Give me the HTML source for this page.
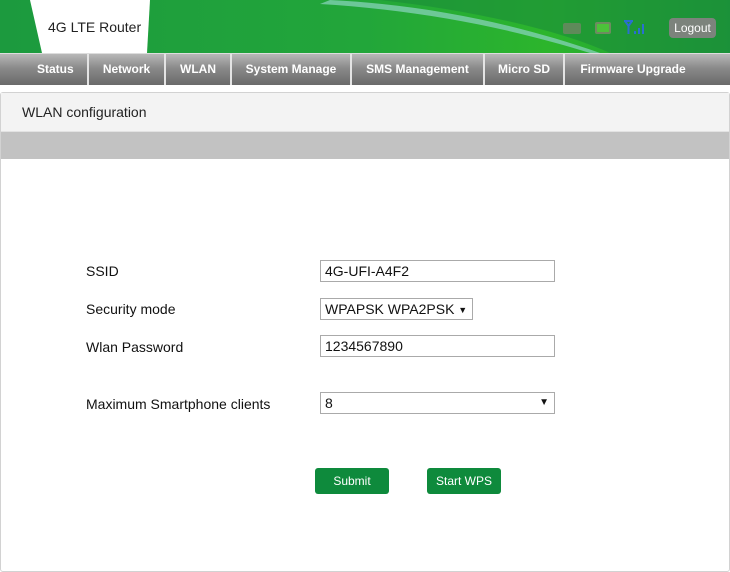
<!DOCTYPE html>
<html><head><style>
body{margin:0;width:730px;height:570px;overflow:hidden;background:#fff;font-family:"Liberation Sans",Arial,sans-serif;position:relative}
.hdr{position:absolute;left:0;top:0;width:730px;height:53px;background:linear-gradient(90deg,#1c9a3e 0%,#22a63a 50%,#2cb52c 75%,#1d9a3a 100%);overflow:hidden}
.nav{position:absolute;left:0;top:53px;width:730px;height:31px;background:linear-gradient(#b8b8b8,#8a8a8a 45%,#6a6a6a);border-top:1px solid #ddd}
.nav div{position:absolute;top:0;height:31px;line-height:31px;color:#fff;font-weight:bold;font-size:12px;text-align:center;border-right:2px solid #e4e4e4;white-space:nowrap}
.panel{position:absolute;left:0;top:92px;width:728px;height:478px;border:1px solid #d2d2d2;border-radius:3px}
input,.sel{position:absolute;box-sizing:border-box;border:1px solid #aaa;font-family:"Liberation Sans",Arial,sans-serif;font-size:14px;color:#111;padding:0 4px;height:22px;line-height:20px;background:#fff;white-space:nowrap}
.lbl{position:absolute;left:86px;font-size:14px;color:#111}
.btn{position:absolute;top:468px;height:26px;background:#0e8a3c;color:#fff;font-size:12px;line-height:26px;text-align:center;border-radius:3px}
</style></head><body>
<div class="hdr">
<svg width="730" height="53" style="position:absolute;left:0;top:0">
<path d="M380 0 C470 10 560 30 610 53 L730 53 L730 0 Z" fill="#1b8c38" opacity=".6"/>
<path d="M330 0 C430 5 520 25 600 53 L590 53 C510 28 420 10 320 4 Z" fill="#7fd0b0" opacity=".8"/>
<path d="M30 0 L150 0 L147 53 L42 53 Z" fill="#fff"/>
</svg>
<div style="position:absolute;left:48px;top:19px;font-size:14px;color:#222">4G LTE Router</div>
<div style="position:absolute;left:563px;top:23px;width:18px;height:11px;background:#5f8a5a;border-radius:2px"></div>
<div style="position:absolute;left:595px;top:22px;width:16px;height:12px;background:#6e8b60;border-radius:2px"><div style="margin:2px;width:12px;height:8px;background:#4cc23a"></div></div>
<svg style="position:absolute;left:622px;top:19px" width="26" height="16"><path d="M2 2 L11 2 M3 2 L6.5 7 L10 2 M6.5 7 V15" stroke="#2a6fd0" stroke-width="2" fill="none"/><rect x="12" y="12" width="2" height="3" fill="#2a6fd0"/><rect x="16" y="9" width="2" height="6" fill="#2a6fd0"/><rect x="20" y="5" width="2" height="10" fill="#2a6fd0"/></svg>
<div style="position:absolute;left:669px;top:18px;width:47px;height:20px;background:#7c837c;border-radius:4px;color:#fff;font-size:12px;line-height:20px;text-align:center">Logout</div>
</div>
<div class="nav">
<div style="left:0;width:87px;text-indent:37px;text-align:left">Status</div>
<div style="left:89px;width:75px">Network</div>
<div style="left:166px;width:64px">WLAN</div>
<div style="left:232px;width:118px">System Manage</div>
<div style="left:352px;width:131px">SMS Management</div>
<div style="left:485px;width:78px">Micro SD</div>
<div style="left:565px;width:136px;border:none">Firmware Upgrade</div>
</div>
<div class="panel">
<div style="height:38px;background:#f3f3f3;border-bottom:1px solid #e2e2e2;font-size:14px;line-height:38px;padding-left:21px;color:#222">WLAN configuration</div>
<div style="height:27px;background:#c2c2c2"></div>
</div>
<div class="lbl" style="top:263px">SSID</div>
<div class="lbl" style="top:301px">Security mode</div>
<div class="lbl" style="top:339px">Wlan Password</div>
<div class="lbl" style="top:396px">Maximum Smartphone clients</div>
<input style="left:320px;top:260px;width:235px" value="4G-UFI-A4F2">
<div class="sel" style="left:320px;top:298px;width:153px">WPAPSK WPA2PSK <span style="font-size:9px;vertical-align:1px">▼</span></div>
<input style="left:320px;top:335px;width:235px" value="1234567890">
<div class="sel" style="left:320px;top:392px;width:235px">8<span style="position:absolute;right:5px;font-size:10px">▼</span></div>
<div class="btn" style="left:315px;width:74px">Submit</div>
<div class="btn" style="left:427px;width:74px">Start WPS</div>
</body></html>
